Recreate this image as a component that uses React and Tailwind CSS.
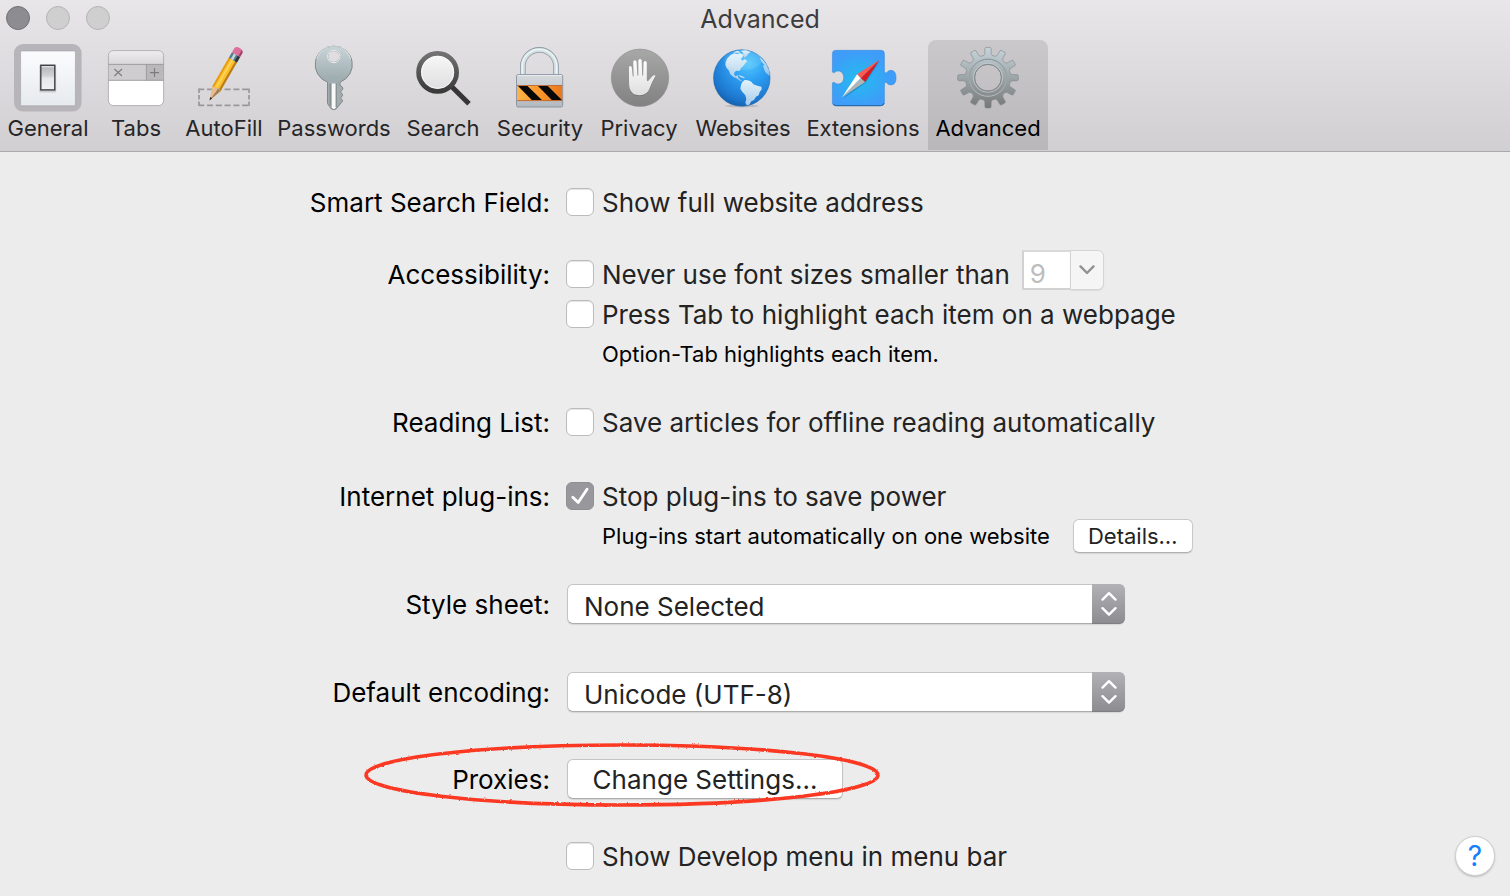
import React from "react";

const iconClass = "h-[70px] w-[70px]";

function GeneralIcon() {
  return (
    <svg className={iconClass} viewBox="0 0 70 70" aria-hidden="true">
      <defs>
        <linearGradient id="plate" x1="0" y1="0" x2="0" y2="1">
          <stop offset="0" stopColor="#fcfcfd" />
          <stop offset="1" stopColor="#e6eaee" />
        </linearGradient>
        <linearGradient id="rocker" x1="0" y1="0" x2="0" y2="1">
          <stop offset="0" stopColor="#f2f3f4" />
          <stop offset="0.12" stopColor="#b9bbbd" />
          <stop offset="0.45" stopColor="#d2d5d7" />
          <stop offset="0.52" stopColor="#e4e8ea" />
          <stop offset="1" stopColor="#eef1f3" />
        </linearGradient>
      </defs>
      <rect x="1" y="2" width="67.6" height="67.6" rx="9" fill="#b8b5ba" />
      <rect x="7.6" y="9" width="54.8" height="54.8" rx="1" fill="url(#plate)" stroke="#9fa1a5" strokeWidth="0.6" />
      <rect x="26.2" y="22.4" width="17" height="28" rx="1.5" fill="#000" opacity="0.14" />
      <rect x="27.8" y="23.3" width="14" height="24.6" fill="url(#rocker)" stroke="#404247" strokeWidth="1.4" />
    </svg>
  );
}

function TabsIcon() {
  return (
    <svg className={iconClass} viewBox="0 0 70 70" aria-hidden="true">
      <defs>
        <linearGradient id="tabTop" x1="0" y1="0" x2="0" y2="1">
          <stop offset="0" stopColor="#f0eef0" />
          <stop offset="1" stopColor="#d9d7d9" />
        </linearGradient>
        <clipPath id="tabClip">
          <rect x="7.4" y="8.6" width="55.2" height="55" rx="5" />
        </clipPath>
      </defs>
      <g clipPath="url(#tabClip)">
        <rect x="7" y="8" width="56" height="56" fill="#fff" />
        <rect x="7" y="8" width="56" height="14" fill="url(#tabTop)" />
        <rect x="7" y="22" width="56" height="16.4" fill="#cfcdd0" />
        <rect x="45" y="22" width="18" height="16.4" fill="#bab8bb" />
        <path d="M7 22.4H63M7 38.3H63M45.4 22V38.4" stroke="#9a989b" strokeWidth="0.9" fill="none" />
      </g>
      <rect x="7.4" y="8.6" width="55.2" height="55" rx="5" fill="none" stroke="#a3a1a5" strokeWidth="0.8" />
      <path d="M13.4 27l7.6 7M21 27l-7.6 7M49 30.6h9M53.5 26v9" stroke="#7d7b7e" strokeWidth="1.1" fill="none" />
    </svg>
  );
}

function AutoFillIcon() {
  return (
    <svg className={iconClass} viewBox="0 0 70 70" aria-hidden="true">
      <path d="M10.2 47.3H60.4M10.2 63.3H60.4" stroke="#99979a" strokeWidth="1.7" strokeDasharray="6 2.8" strokeDashoffset="1" fill="none" />
      <path d="M10 46.5V64M60 46.5V64" stroke="#99979a" strokeWidth="1.7" strokeDasharray="4.5 2" fill="none" />
      <g transform="translate(20.5 58.6) rotate(30)">
        <path d="M0 0L-4.6 -13.5L-1.6 -15L1.6 -13.5L4.6 -13.5Z" fill="#e3bd92" />
        <path d="M0 0L4.6 -13.5L1.6 -14.5Z" fill="#a57c50" />
        <path d="M0 0L-1.1 -3.4L1.1 -3.4Z" fill="#252220" />
        <path d="M-4.7 -13V-47H4.7V-13L1.6 -15.4L-1.6 -13.4L-3.4 -15Z" fill="#fcc02e" />
        <path d="M-4.7 -13V-47H-3V-14.6Z" fill="#e39a17" />
        <path d="M2.6 -15V-47H4.7V-13Z" fill="#b77b18" />
        <path d="M-1.5 -15V-47H0V-15Z" fill="#ffd55d" />
        <rect x="-4.7" y="-53" width="9.4" height="6.2" fill="#557a8b" />
        <rect x="-2.4" y="-53" width="2.6" height="6.2" fill="#c1d5dc" />
        <rect x="2" y="-53" width="2.7" height="6.2" fill="#31353c" />
        <path d="M-4.7 -53V-57.4Q-4.5 -60.6 0 -60.6Q4.5 -60.6 4.7 -57.4V-53Z" fill="#dd709a" />
        <path d="M2.6 -53V-60Q4.6 -59.4 4.7 -57.4V-53Z" fill="#9d4268" />
      </g>
    </svg>
  );
}

function PasswordsIcon() {
  return (
    <svg className={iconClass} viewBox="0 0 70 70" aria-hidden="true">
      <defs>
        <linearGradient id="key" x1="0" y1="0" x2="0" y2="1">
          <stop offset="0" stopColor="#c9d5d8" />
          <stop offset="0.5" stopColor="#a0adb1" />
          <stop offset="1" stopColor="#a4aaac" />
        </linearGradient>
      </defs>
      <path
        fillRule="evenodd"
        d="M34.7 4A18.6 18.6 0 0 1 41 40.1V43.2Q43.9 45 43.9 46.6Q43.8 48 42 49.2Q41 50 42 50.8Q43.6 51.8 43.6 53.2Q43.4 54.4 42 55.4Q41.2 56.2 42.2 56.8Q43.6 57.8 43.5 59.2L37.3 66.8Q34.7 68.6 32.2 66.8L28.5 61.5V40.1A18.6 18.6 0 0 1 34.7 4ZM34.7 8.5A6 6 0 1 0 34.7 20.5A6 6 0 1 0 34.7 8.5Z"
        fill="url(#key)"
        stroke="#80888b"
        strokeWidth="1"
      />
      <path d="M17.8 17A17.5 17.5 0 0 1 51.6 17" stroke="#e9f1f2" strokeWidth="1.2" fill="none" opacity="0.6" />
      <circle cx="34.7" cy="14.5" r="6.2" fill="none" stroke="#f1f4f5" strokeWidth="1" />
      <path d="M32.8 41.4H36.8V65.8L34.8 67.2L32.8 65.8Z" fill="#f7f8f8" />
      <path d="M37.2 41.4V65" stroke="#7b8385" strokeWidth="0.9" />
      <path d="M31.2 41.4V63.6" stroke="#7b8385" strokeWidth="1" />
    </svg>
  );
}

function SearchIcon() {
  return (
    <svg className={iconClass} viewBox="0 0 70 70" aria-hidden="true">
      <defs>
        <linearGradient id="ring" x1="0" y1="0" x2="0" y2="1">
          <stop offset="0" stopColor="#727272" />
          <stop offset="1" stopColor="#3a3a3a" />
        </linearGradient>
        <linearGradient id="lens" x1="0" y1="0" x2="0" y2="1">
          <stop offset="0" stopColor="#f9f9f9" />
          <stop offset="1" stopColor="#dddcde" />
        </linearGradient>
      </defs>
      <path d="M42.6 43.4L61 61.8" stroke="#363636" strokeWidth="5" />
      <circle cx="29.6" cy="30.3" r="19" fill="url(#lens)" stroke="url(#ring)" strokeWidth="4.8" />
      <circle cx="29.6" cy="30.3" r="16" fill="none" stroke="#fafafa" strokeWidth="1" opacity="0.8" />
    </svg>
  );
}

function SecurityIcon() {
  return (
    <svg className={iconClass} viewBox="0 0 70 70" aria-hidden="true">
      <defs>
        <linearGradient id="lockBody" x1="0" y1="0" x2="0" y2="1">
          <stop offset="0" stopColor="#d5d9dc" />
          <stop offset="1" stopColor="#b3b9be" />
        </linearGradient>
        <linearGradient id="hazard" x1="0" y1="0" x2="1" y2="0">
          <stop offset="0" stopColor="#ffb347" />
          <stop offset="0.5" stopColor="#fb962c" />
          <stop offset="1" stopColor="#e9781b" />
        </linearGradient>
      </defs>
      <path d="M17.8 33V24.5A16.6 16.6 0 0 1 51 24.5V33" fill="none" stroke="#8d9aa4" strokeWidth="5.6" />
      <path d="M17.8 33V24.5A16.6 16.6 0 0 1 51 24.5V33" fill="none" stroke="#d3dfe3" strokeWidth="4" />
      <path d="M17.2 33V24.5A17.2 17.2 0 0 1 51.6 24.5V33" fill="none" stroke="#f0f6f7" strokeWidth="1.3" />
      <rect x="11.5" y="32.6" width="46.2" height="32.4" rx="1.6" fill="url(#lockBody)" stroke="#8791a0" strokeWidth="0.9" />
      <path d="M12.5 33.6H56.8" stroke="#eef1f3" strokeWidth="0.9" />
      <rect x="12" y="43.6" width="45.2" height="15.2" fill="url(#hazard)" />
      <path d="M13 43.9H22.5L36.9 58H26.8ZM33 43.9H42.8L56.9 58H46.8Z" fill="#090909" />
      <path d="M12 43.5H57.2M12 58.6H57.2" stroke="#b95c28" strokeWidth="0.8" />
    </svg>
  );
}

const handPath =
  "M25 25.5Q25.1 24.1 26.3 24.1Q27.6 24.1 27.8 25.6L28.8 34.6H29.6L29.2 20Q29.3 18.2 30.9 18.2Q32.4 18.2 32.6 20L33.4 33.4H34.3V18.6Q34.4 16.9 36 16.9Q37.6 16.9 37.7 18.6L38.2 33.4H39.1L39.5 20.6Q39.7 19 41.2 19Q42.8 19 42.8 20.7L42.9 38.6Q43.6 40 44.8 38.2L48.6 34Q50 32.8 51.4 33.6Q51.6 34.4 50.2 36.2Q47.8 40.2 46 45.6Q43.6 53.2 35.6 53.2Q27.6 53.2 25.6 46.2Q24.9 43.2 25 38Z";

function PrivacyIcon() {
  return (
    <svg className={iconClass} viewBox="0 0 70 70" aria-hidden="true">
      <defs>
        <linearGradient id="privacyDisc" x1="0" y1="0" x2="0" y2="1">
          <stop offset="0" stopColor="#a9a8a9" />
          <stop offset="1" stopColor="#828182" />
        </linearGradient>
        <linearGradient id="hand" x1="0" y1="0" x2="0" y2="1">
          <stop offset="0" stopColor="#ffffff" />
          <stop offset="1" stopColor="#dedede" />
        </linearGradient>
      </defs>
      <circle cx="36" cy="35.8" r="28.7" fill="url(#privacyDisc)" stroke="#8b8a8b" strokeWidth="0.6" />
      <path d={handPath} fill="#555" opacity="0.35" transform="translate(0 1)" />
      <path d={handPath} fill="url(#hand)" />
    </svg>
  );
}

function WebsitesIcon() {
  return (
    <svg className={iconClass} viewBox="0 0 70 70" aria-hidden="true">
      <defs>
        <radialGradient id="ocean" cx="0.62" cy="0.24" r="0.82">
          <stop offset="0" stopColor="#52c8fd" />
          <stop offset="0.4" stopColor="#2c9df2" />
          <stop offset="0.8" stopColor="#1d78cf" />
          <stop offset="1" stopColor="#155ba8" />
        </radialGradient>
        <linearGradient id="land" x1="0" y1="0" x2="0" y2="1">
          <stop offset="0" stopColor="#e2f3fb" />
          <stop offset="1" stopColor="#a9cbea" />
        </linearGradient>
      </defs>
      <ellipse cx="33.8" cy="64" rx="17" ry="1.4" fill="#000" opacity="0.12" />
      <circle cx="33.8" cy="36" r="28.3" fill="url(#ocean)" stroke="#1f65a8" strokeWidth="0.5" />
      <g transform="translate(-18 -42) scale(0.33333)" fill="url(#land)">
        <path d="M107 186L112 175L122 165L132 160L142 163L150 159L160 164L158 172L152 176L158 182L164 177L172 184L166 190L160 198L153 204L149 213L140 212L134 216L132 223L137 229L143 225L145 233L151 239L157 244L150 242L142 236L130 230L121 223L117 212L110 204L106 195Z" />
        <path d="M130 157L142 152L152 156L146 160L136 160Z" />
        <path d="M152 152L168 151L182 156L176 160L170 168L164 173L159 165L160 159Z" />
        <path d="M145 226L156 228L166 234L160 235L150 230Z" />
        <path d="M157 246L164 240L174 241L184 245L190 253L202 257L214 260L215 268L209 276L206 286L198 290L192 300L184 304L178 314L170 316L166 308L169 298L166 286L157 276L151 266L153 255Z" />
        <path d="M209 172L218 179L229 193L237 211L239 228L232 222L226 217L222 207L219 196L224 196L215 185Z" opacity="0.8" />
      </g>
      <ellipse cx="35" cy="18" rx="19" ry="10" fill="#fff" opacity="0.1" />
    </svg>
  );
}

function ExtensionsIcon() {
  return (
    <svg className={iconClass} viewBox="0 0 70 70" aria-hidden="true">
      <defs>
        <radialGradient id="puzzle" cx="0.42" cy="0.52" r="0.5">
          <stop offset="0" stopColor="#22bdee" />
          <stop offset="1" stopColor="#3f9cf9" />
        </radialGradient>
      </defs>
      <g transform="translate(-137.6 -42) scale(0.33333)">
        <path
          d="M436 151H572Q582 151 582 161V214Q584 222 589 218Q593 211 602 211Q617 212 617 233Q617 254 602 255Q593 255 589 248Q584 244 582 252V307Q582 317 572 317H436Q426 317 426 307V249Q428 245 433 248Q438 253 446 252Q460 249 460 232Q459 216 446 213Q438 212 433 217Q428 220 426 216V161Q426 151 436 151Z"
          fill="url(#puzzle)"
          stroke="#2f86dc"
          strokeWidth="1.6"
        />
        <path d="M428 311Q430 317 438 317H570Q580 317 581 309" fill="none" stroke="#22619f" strokeWidth="3" />
        <path d="M569 183L526 248L458 296Z" fill="#0a5f96" opacity="0.35" />
        <path d="M567 180L500 223L511 235Z" fill="#fb5a50" />
        <path d="M567 180L511 235L524 246Z" fill="#d81a22" />
        <path d="M455 292L500 223L511 235Z" fill="#ffffff" />
        <path d="M455 292L511 235L524 246Z" fill="#b3b5b5" />
      </g>
    </svg>
  );
}

function gearPath(teeth, cx, cy, outer, inner) {
  const at = (r, deg) => {
    const a = (deg * Math.PI) / 180;
    return `${(cx + r * Math.cos(a)).toFixed(2)} ${(cy + r * Math.sin(a)).toFixed(2)}`;
  };
  let d = "";
  for (let i = 0; i < teeth; i++) {
    const m = (360 / teeth) * i;
    d += `${i ? "L" : "M"}${at(inner, m - 11)}L${at(inner + 1.6, m - 7.6)}L${at(outer - 1, m - 6)}L${at(outer, m - 4.4)}`;
    d += `L${at(outer, m + 4.4)}L${at(outer - 1, m + 6)}L${at(inner + 1.6, m + 7.6)}L${at(inner, m + 11)}`;
  }
  return d + "Z";
}

function AdvancedIcon() {
  const hole = "M35 22.3A13.4 13.4 0 1 0 35 49.1A13.4 13.4 0 1 0 35 22.3Z";
  return (
    <svg className={iconClass} viewBox="0 0 70 70" aria-hidden="true">
      <defs>
        <linearGradient id="gear" x1="0" y1="0" x2="0" y2="1">
          <stop offset="0" stopColor="#c6d5da" />
          <stop offset="0.5" stopColor="#9da5a8" />
          <stop offset="1" stopColor="#767877" />
        </linearGradient>
        <linearGradient id="gearRing" x1="0" y1="0" x2="0" y2="1">
          <stop offset="0" stopColor="#7d8b91" />
          <stop offset="1" stopColor="#b9bcbc" />
        </linearGradient>
      </defs>
      <path d={gearPath(12, 35, 35.7, 30.4, 22.6) + hole} fillRule="evenodd" fill="url(#gear)" stroke="#7f888b" strokeWidth="0.6" />
      <circle cx="35" cy="35.7" r="18.6" fill="none" stroke="url(#gearRing)" strokeWidth="1" />
      <circle cx="35" cy="35.7" r="14.6" fill="none" stroke="#c3cacc" strokeWidth="0.9" />
      <circle cx="35" cy="35.7" r="13.4" fill="none" stroke="#7b8285" strokeWidth="0.8" />
    </svg>
  );
}

const tabs = [
  { name: "General", Icon: GeneralIcon, width: "w-[96px]" },
  { name: "Tabs", Icon: TabsIcon, width: "w-[80px]" },
  { name: "AutoFill", Icon: AutoFillIcon, width: "w-[96px]" },
  { name: "Passwords", Icon: PasswordsIcon, width: "w-[124px]" },
  { name: "Search", Icon: SearchIcon, width: "w-[94px]" },
  { name: "Security", Icon: SecurityIcon, width: "w-[100px]" },
  { name: "Privacy", Icon: PrivacyIcon, width: "w-[98px]" },
  { name: "Websites", Icon: WebsitesIcon, width: "w-[110px]" },
  { name: "Extensions", Icon: ExtensionsIcon, width: "w-[130px]" },
  { name: "Advanced", Icon: AdvancedIcon, width: "w-[120px]", active: true },
];

function WindowHeader() {
  return (
    <header className="border-b border-[#a9a8aa] bg-linear-to-b from-[#e8e6e8] to-[#d1cfd1] pb-px">
      <div className="grid h-10 grid-cols-[1fr_auto_1fr] items-start pl-[10px]">
        <div className="-ml-1 flex gap-4 pt-1.5">
          <button aria-label="Close" className="size-6 rounded-full border border-[#727175] bg-[#8d8c90]" />
          <button aria-label="Minimize" className="size-6 rounded-full border border-[#b5b4b5] bg-[#d0cfd0]" />
          <button aria-label="Zoom" className="size-6 rounded-full border border-[#b5b4b5] bg-[#d0cfd0]" />
        </div>
        <h1 className="pt-[3px] text-[25px] leading-8 text-[#3c3b3d]">Advanced</h1>
      </div>
      <nav className="flex">
        {tabs.map(({ name, Icon, width, active }) => (
          <button
            key={name}
            aria-current={active ? "page" : undefined}
            className={`flex h-[110px] shrink-0 flex-col items-center rounded-t-lg pt-0.5 ${width} ${
              active ? "bg-linear-to-b from-[#cac8ca] to-[#b9b7b9] text-black" : "text-[#262527]"
            }`}
          >
            <Icon />
            <span className="text-[22px] leading-8">{name}</span>
          </button>
        ))}
      </nav>
    </header>
  );
}

function CheckOption({ id, children, defaultChecked }) {
  return (
    <div className="flex h-10 items-center gap-2">
      <span className="relative flex size-7">
        <input
          id={id}
          type="checkbox"
          defaultChecked={defaultChecked}
          className="peer size-7 appearance-none rounded-md border border-[#bcbcbc] bg-white shadow-[inset_0_1px_1px_#e4e4e4] checked:border-[#8f8e93] checked:bg-[#98979c] checked:shadow-none"
        />
        <svg className="pointer-events-none absolute inset-0 hidden size-7 peer-checked:block" viewBox="0 0 28 28" aria-hidden="true">
          <path d="M6.8 15.2L12.2 20.6L21 7.2" fill="none" stroke="#fff" strokeWidth="2.8" strokeLinecap="round" strokeLinejoin="round" />
        </svg>
      </span>
      <label htmlFor={id} className="pt-0.5 text-[26px] leading-8 whitespace-nowrap text-[#232323]">
        {children}
      </label>
    </div>
  );
}

function PopUp({ id, value }) {
  return (
    <div className="relative ml-px w-[558px] max-w-full">
      <select
        id={id}
        className="h-10 w-full appearance-none rounded-md border border-[#c4c4c4] border-b-[#acacac] bg-white pt-0.5 pl-4 text-[26px] text-[#232323] shadow-[0_1px_1px_#d6d6d6]"
      >
        <option>{value}</option>
      </select>
      <span className="pointer-events-none absolute inset-y-0 right-0 flex w-[33px] items-center justify-center rounded-r-md border-b border-[#7f7e83] bg-linear-to-b from-[#b2b1b6] to-[#8d8c91]">
        <svg className="h-6 w-4" viewBox="0 0 16 24" fill="none" stroke="#fff" strokeWidth="2.4" strokeLinecap="round" strokeLinejoin="round" aria-hidden="true">
          <path d="M1.5 7.6L8 1.2L14.5 7.6M1.5 16.2L8 22.6L14.5 16.2" />
        </svg>
      </span>
    </div>
  );
}

function Row({ label, htmlFor, children }) {
  return (
    <div className="grid grid-cols-[550fr_944fr] gap-x-4">
      <div className="flex h-10 items-center justify-end pt-0.5 text-[26px] leading-8 whitespace-nowrap text-black">
        {label && (htmlFor ? <label htmlFor={htmlFor}>{label}</label> : <span>{label}</span>)}
      </div>
      <div>{children}</div>
    </div>
  );
}

function HandDrawnEllipse() {
  return (
    <svg className="pointer-events-none absolute -top-[17px] -right-[39px] h-[66px] w-[520px]" viewBox="0 0 520 66" aria-hidden="true">
      <defs>
        <filter id="crayon" x="-2%" y="-10%" width="104%" height="120%">
          <feTurbulence type="fractalNoise" baseFrequency="0.35" numOctaves="2" seed="4" />
          <feDisplacementMap in="SourceGraphic" scale="2.2" xChannelSelector="R" yChannelSelector="G" />
        </filter>
      </defs>
      <ellipse cx="260" cy="33" rx="256" ry="30" fill="none" stroke="#fb3823" strokeWidth="3.6" filter="url(#crayon)" />
    </svg>
  );
}

export default function App() {
  return (
    <div className="min-h-screen bg-[#ececec] font-[Inter,'Liberation_Sans',sans-serif]">
      <WindowHeader />
      <main className="pt-[30px]">
        <Row label="Smart Search Field:">
          <CheckOption id="full-address">Show full website address</CheckOption>
        </Row>
        <div className="h-8" />
        <Row label="Accessibility:">
          <div className="flex h-10 items-center gap-3">
            <CheckOption id="min-font">Never use font sizes smaller than</CheckOption>
            <div className="mb-2 flex h-10">
              <input
                aria-label="Minimum font size"
                disabled
                defaultValue="9"
                className="w-12 border-2 border-r-0 border-[#d2d2d2] border-t-[#dadada] bg-white pt-1.5 pl-1.5 text-[26px] text-[#bdbdbd]"
              />
              <button
                aria-label="Choose font size"
                disabled
                className="flex w-[34px] items-center justify-center rounded-r-md border border-[#d4d4d4] bg-[#f5f5f5] shadow-[0_1px_1px_#dcdcdc]"
              >
                <svg className="h-3 w-4" viewBox="0 0 16 12" fill="none" stroke="#929292" strokeWidth="2.4" strokeLinecap="round" strokeLinejoin="round" aria-hidden="true">
                  <path d="M1.5 2.4L8 9L14.5 2.4" />
                </svg>
              </button>
            </div>
          </div>
          <CheckOption id="press-tab">Press Tab to highlight each item on a webpage</CheckOption>
          <p className="pl-9 text-[22px] leading-10 text-black">Option-Tab highlights each item.</p>
        </Row>
        <div className="h-7" />
        <Row label="Reading List:">
          <CheckOption id="save-articles">Save articles for offline reading automatically</CheckOption>
        </Row>
        <div className="h-[34px]" />
        <Row label="Internet plug-ins:">
          <CheckOption id="stop-plugins" defaultChecked>
            Stop plug-ins to save power
          </CheckOption>
          <div className="flex h-10 items-center gap-[23px] pl-9 text-[22px] text-black">
            <p className="whitespace-nowrap">Plug-ins start automatically on one website</p>
            <button className="h-[34px] w-[120px] rounded-md border border-[#c8c8c8] border-b-[#b0b0b0] bg-white text-[#232323] shadow-[0_1px_1px_#d6d6d6]">
              Details…
            </button>
          </div>
        </Row>
        <div className="h-7" />
        <Row label="Style sheet:" htmlFor="style-sheet">
          <PopUp id="style-sheet" value="None Selected" />
        </Row>
        <div className="h-12" />
        <Row label="Default encoding:" htmlFor="encoding">
          <PopUp id="encoding" value="Unicode (UTF-8)" />
        </Row>
        <div className="h-[47px]" />
        <Row label="Proxies:">
          <div className="relative ml-px w-[276px]">
            <button className="h-10 w-full rounded-md border border-[#c4c4c4] border-b-[#acacac] bg-white text-[26px] whitespace-nowrap text-[#232323] shadow-[0_1px_1px_#d6d6d6]">
              Change Settings…
            </button>
            <HandDrawnEllipse />
          </div>
        </Row>
        <div className="h-[37px]" />
        <Row>
          <div className="flex items-center justify-between pr-[15px]">
            <CheckOption id="develop-menu">Show Develop menu in menu bar</CheckOption>
            <button
              aria-label="Help"
              className="size-10 rounded-full border border-[#cfcfcf] bg-white text-[28px] leading-9 text-[#147efb] shadow-[0_1px_2px_#bdbdbd]"
            >
              ?
            </button>
          </div>
        </Row>
      </main>
    </div>
  );
}
